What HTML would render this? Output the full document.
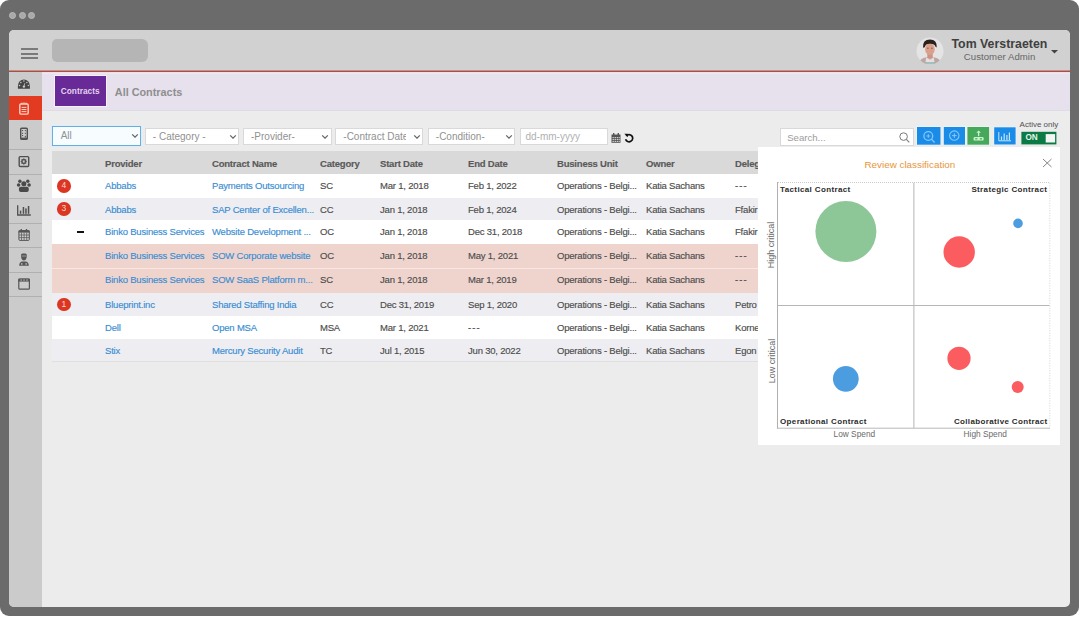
<!DOCTYPE html>
<html><head><meta charset="utf-8">
<style>
*{box-sizing:border-box;margin:0;padding:0}
html,body{width:1080px;height:620px;overflow:hidden;background:#fff;font-family:"Liberation Sans",sans-serif;position:relative}
.a{position:absolute}
.t{position:absolute;white-space:nowrap;line-height:1}
#frame{left:0;top:0;width:1079.2px;height:615.8px;background:#6b6b6b;border-radius:9px}
.dot{width:7.2px;height:7.2px;border-radius:50%;background:#a9a9a9;border:1px solid #bababa;top:11.9px}
#screen{left:9px;top:30px;width:1060.7px;height:576.8px;background:#ececec;border-radius:5px}
#header{left:9px;top:30px;width:1060.7px;height:40.6px;background:#d1d1d1;border-radius:5px 5px 0 0}
#redline{left:9px;top:70.3px;width:1060.7px;height:2.3px;background:linear-gradient(#e8b4ac 0%,#a3524a 40%,#a3524a 60%,#ebc8c8 100%)}
#side{left:9px;top:71.7px;width:32.6px;height:535.3px;background:#cbcbcb;border-bottom-left-radius:5px}
.sep{left:9px;width:32.6px;height:1px;background:#b0b0b0}
#sub{left:41.6px;top:72px;width:1028.1px;height:38.5px;background:#e6e1ec;border-bottom:1px solid #dfdce3}
.sel{position:absolute;top:127.6px;height:17.6px;background:#fff;border:1px solid #d9d9d9}
.sel span{position:absolute;left:7px;top:3.3px;font-size:10px;color:#919191;white-space:nowrap;line-height:1}
.chev{position:absolute;right:1.2px;top:5.3px}
.row{position:absolute;left:52px;width:1006px}
.row .t{font-size:9.5px;letter-spacing:-0.2px;-webkit-text-stroke:0.15px currentColor}
.lnk{color:#3a8dd2}
.dk{color:#4d4d4d}
.badge{position:absolute;left:5px;width:13.6px;height:13.6px;border-radius:50%;background:#dc3622;color:#f6d9d3;font-size:8.5px;text-align:center;line-height:13.6px}
.hd{font-size:9px;font-weight:700;color:#5a5a5a}
.btn{position:absolute;top:127px;height:18px}
</style></head><body>
<div id="frame" class="a"></div>
<div class="a dot" style="left:9.1px"></div>
<div class="a dot" style="left:18.5px"></div>
<div class="a dot" style="left:27.8px"></div>
<div id="screen" class="a"></div>
<div id="header" class="a"></div>
<!-- hamburger -->
<div class="a" style="left:20.8px;top:48.4px;width:17px;height:2.1px;background:#7a7a7a"></div>
<div class="a" style="left:20.8px;top:52.9px;width:17px;height:2.1px;background:#7a7a7a"></div>
<div class="a" style="left:20.8px;top:57.4px;width:17px;height:2.1px;background:#7a7a7a"></div>
<!-- blurred logo -->
<div class="a" style="left:52.2px;top:39.2px;width:96px;height:22.4px;background:#b5b5b5;border-radius:5px 6px 6px 5px;filter:blur(0.7px)"></div>
<!-- user -->
<svg class="a" style="left:916.2px;top:37.3px" width="28" height="28" viewBox="0 0 28 28">
  <defs><clipPath id="cc"><circle cx="14" cy="14" r="13.5"/></clipPath></defs>
  <circle cx="14" cy="14" r="13.5" fill="#e4e4e4"/>
  <g clip-path="url(#cc)">
    <path d="M2.5 27 Q4 21 10.3 20.2 L17.7 20.2 Q24 21 25.5 27 Z" fill="#bba8a5"/>
    <path d="M10.3 20.2 L14 22.8 L17.7 20.2 L18.5 25 L9.5 25 Z" fill="#ecdcdb"/>
    <ellipse cx="14" cy="26.3" rx="5" ry="1.4" fill="#9fc2c0"/>
    <rect x="11.3" y="15.5" width="5.4" height="5.5" fill="#cf937f"/>
    <ellipse cx="13.9" cy="12.2" rx="4.8" ry="5.9" fill="#d9a18b"/>
    <circle cx="11.9" cy="11.2" r="0.7" fill="#8a5a48"/><circle cx="15.9" cy="11.2" r="0.7" fill="#8a5a48"/>
    <path d="M7 10.8 Q6.4 2.6 14 2.5 Q21.2 2.6 20.7 10.4 L19.3 9.6 Q18.6 6.6 14 6.8 Q9.6 6.6 8.7 10.2 Z" fill="#2b201c"/>
  </g>
</svg>
<div class="t" style="left:951.5px;top:37.6px;font-size:12.35px;font-weight:700;color:#3f3f3f">Tom Verstraeten</div>
<div class="t" style="left:963.8px;top:51.5px;font-size:9.6px;color:#666;letter-spacing:0.05px">Customer Admin</div>
<svg class="a" style="left:1051px;top:50px" width="7" height="4" viewBox="0 0 7 4"><path d="M0 0 L7 0 L3.5 3.6Z" fill="#444"/></svg>
<div id="redline" class="a"></div>
<div id="side" class="a"></div>
<!-- red active -->
<div class="a" style="left:9px;top:96.2px;width:32.6px;height:24.3px;background:#e33a22"></div>
<div class="a sep" style="top:149.3px"></div>
<div class="a sep" style="top:173.6px"></div>
<div class="a sep" style="top:198.2px"></div>
<div class="a sep" style="top:222.8px"></div>
<div class="a sep" style="top:247.3px"></div>
<div class="a sep" style="top:271.9px"></div>
<div class="a sep" style="top:296.2px"></div>
<!--SIDE--><svg class="a" style="left:9px;top:72px" width="33" height="230" viewBox="9 72 33 230">
 <!-- dashboard -->
 <path d="M17.9 88.8 L17.9 86 A6 6.6 0 0 1 29.9 86 L29.9 88.8 Z" fill="#464646"/>
 <g fill="#c9c9c9"><circle cx="20.8" cy="82.6" r="0.75"/><circle cx="23.9" cy="80.9" r="0.75"/><circle cx="26.9" cy="82.5" r="0.75"/><circle cx="19.5" cy="85.5" r="0.75"/><circle cx="28.3" cy="85.5" r="0.75"/><circle cx="23.9" cy="86.6" r="1.2"/></g>
 <path d="M23.9 86.6 L24.8 83.2" stroke="#c9c9c9" stroke-width="0.8"/>
 <!-- contracts (active) -->
 <rect x="19.8" y="104" width="8.4" height="10.1" rx="1" stroke="#fbd2c5" stroke-width="1.4" fill="none"/>
 <path d="M21.2 103.3 h1.4 M25.4 103.3 h1.4 M23.3 103 h1.4" stroke="#fbd2c5" stroke-width="1.2"/>
 <path d="M21.6 107.4 H26.4 M21.6 109.5 H26.4 M21.6 111.6 H26.4" stroke="#fbd2c5" stroke-width="1"/>
 <!-- building -->
 <rect x="20.7" y="128.2" width="6.6" height="11" rx="0.9" stroke="#505050" stroke-width="1.4" fill="none"/>
 <path d="M20.2 138.4 H27.7" stroke="#555" stroke-width="1.6"/>
 <g fill="#555"><rect x="22" y="130" width="1.1" height="1.1"/><rect x="24.8" y="130" width="1.1" height="1.1"/><rect x="22" y="132.8" width="1.1" height="1.1"/><rect x="24.8" y="132.8" width="1.1" height="1.1"/><rect x="22" y="135" width="1.1" height="1.1"/><rect x="24.8" y="135.8" width="1.1" height="1.6"/></g>
 <!-- gear box -->
 <rect x="19.2" y="156.6" width="9.5" height="9.9" rx="1" stroke="#505050" stroke-width="1.4" fill="none"/>
 <circle cx="23.8" cy="161.5" r="2" stroke="#555" stroke-width="1.3" fill="none"/>
 <path d="M23.8 158.3 V164.7 M20.6 161.5 H27 M21.5 159.2 L26.1 163.8 M26.1 159.2 L21.5 163.8" stroke="#555" stroke-width="0.7"/>
 <circle cx="23.8" cy="161.5" r="0.9" fill="#c9c9c9"/>
 <!-- people -->
 <g fill="#4a4a4a">
  <circle cx="19.9" cy="181.2" r="1.7"/><circle cx="27.8" cy="181.2" r="1.7"/>
  <circle cx="18.6" cy="185" r="1.8"/><circle cx="29.1" cy="185" r="1.8"/>
  <circle cx="23.85" cy="183.8" r="2.5"/>
  <rect x="18.9" y="186.7" width="9.9" height="5.3" rx="2"/>
 </g>
 <!-- chart -->
 <path d="M17.7 205.2 V215 H30.8" stroke="#505050" stroke-width="1.3" fill="none"/>
 <g fill="#505050"><rect x="19.8" y="210.6" width="1.5" height="3.2"/><rect x="22.7" y="207" width="1.5" height="6.8"/><rect x="25.2" y="208.4" width="1.5" height="5.4"/><rect x="27.8" y="206" width="1.5" height="7.8"/></g>
 <!-- calendar -->
 <rect x="18.9" y="230.6" width="10.4" height="9.8" rx="1" stroke="#555" stroke-width="1" fill="none"/>
 <rect x="18.6" y="230.4" width="11" height="2.2" fill="#555"/>
 <path d="M21.3 229 V231.2 M26.5 229 V231.2" stroke="#555" stroke-width="1.3"/>
 <path d="M21.5 232.5 V240 M24.1 232.5 V240 M26.7 232.5 V240 M19 235 H29.2 M19 237.6 H29.2" stroke="#555" stroke-width="0.7"/>
 <!-- person -->
 <path d="M21 254.5 L22.3 253.6 L23.9 253.4 L25.5 253.6 L26.8 254.5 L26.6 257.2 Q26 260.4 23.9 260.6 Q21.8 260.4 21.2 257.2 Z" fill="#555"/>
 <path d="M21.8 256 H26" stroke="#c9c9c9" stroke-width="0.6"/>
 <path d="M19.2 265.8 Q19.2 261.6 22.4 261.4 L25.4 261.4 Q28.8 261.6 28.8 265.8 Z" fill="#555"/>
 <g fill="#c9c9c9"><rect x="21" y="263.3" width="1.5" height="1.3"/><rect x="25.4" y="263.3" width="1.5" height="1.3"/></g>
 <!-- window -->
 <rect x="18.8" y="279.1" width="10.6" height="10.1" rx="1" stroke="#555" stroke-width="1.2" fill="none"/>
 <rect x="18.4" y="278.6" width="11.4" height="3" fill="#555"/>
 <g fill="#c9c9c9"><rect x="20.4" y="279.6" width="1.6" height="0.9"/><rect x="23.2" y="279.6" width="1.6" height="0.9"/><rect x="26.2" y="279.6" width="1.6" height="0.9"/></g>
</svg>
<!--/SIDE-->
<div id="sub" class="a"></div><div class="a" style="left:41.6px;top:72.6px;width:1028.1px;height:1.6px;background:#f6e4ea"></div>
<!-- Contracts tab -->
<div class="a" style="left:53.8px;top:75.3px;width:53px;height:32px;background:#f3f1f5"></div>
<div class="a" style="left:54.8px;top:76.3px;width:51px;height:30px;background:#672a96"></div>
<div class="t" style="left:60.8px;top:87px;font-size:8.3px;font-weight:700;color:#e3d3ef">Contracts</div>
<div class="t" style="left:114.8px;top:86.8px;font-size:10.85px;font-weight:700;color:#8e8e8e">All Contracts</div>

<!-- filters -->
<div class="sel" style="left:52.2px;top:126.3px;height:19.5px;width:88.5px;border:1.5px solid #6aaee0;box-shadow:0 0 0 1px #dbeef9;background:#f7fdff"><span style="left:7.5px;top:4.1px;font-size:10px">All</span><svg class="chev" width="8" height="5" viewBox="0 0 8 5"><path d="M1.2 1.4 L4 4.1 L6.8 1.4" stroke="#666" stroke-width="1.3" fill="none"/></svg></div>
<div class="sel" style="left:144.8px;width:94.5px"><span>- Category -</span><svg class="chev" width="8" height="5" viewBox="0 0 8 5"><path d="M1.2 1.4 L4 4.1 L6.8 1.4" stroke="#666" stroke-width="1.3" fill="none"/></svg></div>
<div class="sel" style="left:243px;width:88.5px"><span>-Provider-</span><svg class="chev" width="8" height="5" viewBox="0 0 8 5"><path d="M1.2 1.4 L4 4.1 L6.8 1.4" stroke="#666" stroke-width="1.3" fill="none"/></svg></div>
<div class="sel" style="left:335.3px;width:88px;overflow:hidden"><span>-Contract Date</span><div class="a" style="right:0;top:0;width:16px;height:17px;background:#fff"></div><svg class="chev" width="8" height="5" viewBox="0 0 8 5"><path d="M1.2 1.4 L4 4.1 L6.8 1.4" stroke="#666" stroke-width="1.3" fill="none"/></svg></div>
<div class="sel" style="left:427.8px;width:87.5px"><span>-Condition-</span><svg class="chev" width="8" height="5" viewBox="0 0 8 5"><path d="M1.2 1.4 L4 4.1 L6.8 1.4" stroke="#666" stroke-width="1.3" fill="none"/></svg></div>
<div class="sel" style="left:519.5px;width:88px"><span style="left:5px;color:#b0b0b0">dd-mm-yyyy</span></div>
<!-- calendar icon -->
<svg class="a" style="left:610.5px;top:132.5px" width="10" height="10" viewBox="0 0 10 10">
  <rect x="0.5" y="1.5" width="9" height="8.3" fill="#555"/>
  <rect x="2" y="0" width="1.4" height="2.5" fill="#555"/><rect x="6.6" y="0" width="1.4" height="2.5" fill="#555"/>
  <g fill="#ccc"><rect x="1.5" y="4" width="1.4" height="1.2"/><rect x="3.6" y="4" width="1.4" height="1.2"/><rect x="5.7" y="4" width="1.4" height="1.2"/><rect x="7.6" y="4" width="1.2" height="1.2"/>
  <rect x="1.5" y="6" width="1.4" height="1.2"/><rect x="3.6" y="6" width="1.4" height="1.2"/><rect x="5.7" y="6" width="1.4" height="1.2"/><rect x="7.6" y="6" width="1.2" height="1.2"/>
  <rect x="1.5" y="8" width="1.4" height="1"/><rect x="3.6" y="8" width="1.4" height="1"/><rect x="5.7" y="8" width="1.4" height="1"/><rect x="7.6" y="8" width="1.2" height="1"/></g>
</svg>
<!-- undo icon -->
<svg class="a" style="left:623.5px;top:133px" width="10" height="10" viewBox="0 0 10 10">
  <path d="M2.2 3 A3.6 3.6 0 1 1 1.6 6.2" stroke="#111" stroke-width="1.7" fill="none"/>
  <path d="M0.3 0.8 L3.8 0.8 L3.8 4.3 Z" fill="#111"/>
</svg>

<!-- search -->
<div class="sel" style="left:780.4px;width:133.5px;height:18.2px"><span style="left:5.8px;top:4.6px;font-size:9.6px;color:#9c9c9c">Search...</span>
<svg class="a" style="left:117.3px;top:3.6px" width="11" height="11" viewBox="0 0 11 11"><circle cx="4.6" cy="4.6" r="3.8" stroke="#7a7a7a" stroke-width="1" fill="none"/><path d="M7.4 7.4 L10.3 10.3" stroke="#7a7a7a" stroke-width="1.1"/></svg></div>
<!-- buttons -->
<svg class="a" style="left:912px;top:122px" width="150" height="28" viewBox="912 122 150 28">
 <rect x="916.5" y="126.5" width="24.5" height="18.7" fill="#eef8fc"/>
 <rect x="917" y="127" width="23.5" height="17.7" fill="#1a8ce8"/>
 <circle cx="928.3" cy="136" r="4.4" stroke="#86c8f8" stroke-width="1.3" fill="none"/>
 <path d="M931.5 139.3 L934.6 142.5" stroke="#86c8f8" stroke-width="1.3"/>
 <path d="M926.3 136 H930.3 M928.3 134 V138" stroke="#86c8f8" stroke-width="0.9"/>
 <rect x="943.3" y="126.5" width="22.2" height="18.7" fill="#eef8fc"/>
 <rect x="943.8" y="127" width="21.2" height="17.7" fill="#1a8ce8"/>
 <circle cx="954.3" cy="135.6" r="4.7" stroke="#86c8f8" stroke-width="1.1" fill="none"/>
 <path d="M952 135.6 H956.6 M954.3 133.3 V137.9" stroke="#86c8f8" stroke-width="1"/>
 <rect x="966.9" y="126.5" width="22.7" height="18.7" fill="#eefaf0"/>
 <rect x="967.4" y="127" width="21.7" height="17.7" fill="#46a85b"/>
 <path d="M978.6 136.2 V131.8" stroke="#c9f2cc" stroke-width="1.3"/>
 <path d="M976.3 132.8 L978.6 130.4 L980.9 132.8 Z" fill="#c9f2cc"/>
 <rect x="973.6" y="137" width="10" height="3.6" rx="1.2" fill="#c9f2cc"/>
 <rect x="975.2" y="138.2" width="2.2" height="1.2" fill="#46a85b"/><rect x="979.8" y="138.2" width="2.2" height="1.2" fill="#46a85b"/>
 <rect x="993.7" y="126.8" width="22.4" height="18.2" fill="#eef8fc"/>
 <rect x="994.2" y="127.3" width="21.4" height="17.2" fill="#1a8ce8"/>
 <path d="M998.8 132 V140.8 H1011" stroke="#c4e6fd" stroke-width="1" fill="none"/>
 <g fill="#c4e6fd"><rect x="1000.9" y="136.5" width="1.2" height="3.6"/><rect x="1003.6" y="133.5" width="1.2" height="6.6"/><rect x="1006.3" y="135" width="1.2" height="5.1"/><rect x="1008.8" y="132.5" width="1.2" height="7.6"/></g>
 <rect x="1021.4" y="131.8" width="35" height="12.6" fill="#0b7a45"/>
 <rect x="1045.7" y="134.1" width="9.4" height="8.4" fill="#f5f5f5"/>
</svg>
<div class="t" style="left:1019.6px;top:121px;font-size:8px;color:#505050">Active only</div>
<div class="t" style="left:1025.5px;top:134.2px;font-size:8.2px;font-weight:700;color:#e4f6ea">ON</div>

<!-- table -->
<div class="row" style="top:151px;height:23px;background:#d9d9d9">
  <div class="t hd" style="left:53px;top:7.5px">Provider</div>
  <div class="t hd" style="left:160px;top:7.5px">Contract Name</div>
  <div class="t hd" style="left:268px;top:7.5px">Category</div>
  <div class="t hd" style="left:328px;top:7.5px">Start Date</div>
  <div class="t hd" style="left:416px;top:7.5px">End Date</div>
  <div class="t hd" style="left:505px;top:7.5px">Business Unit</div>
  <div class="t hd" style="left:594px;top:7.5px">Owner</div>
  <div class="t hd" style="left:683px;top:7.5px">Delegate</div>
</div>
<!--ROWS--><div class="row" style="top:174px;height:24px;background:#ffffff"><div class="badge" style="left:5.2px;top:5.2px">4</div><div class="t lnk" style="left:53px;top:7.4px;">Abbabs</div><div class="t lnk" style="left:160px;top:7.4px;">Payments Outsourcing</div><div class="t dk" style="left:268px;top:7.4px;">SC</div><div class="t dk" style="left:328px;top:7.4px;">Mar 1, 2018</div><div class="t dk" style="left:416px;top:7.4px;">Feb 1, 2022</div><div class="t dk" style="left:505px;top:7.4px;">Operations - Belgi...</div><div class="t dk" style="left:594px;top:7.4px;">Katia Sachans</div><div class="t dk" style="left:683px;top:7.4px;letter-spacing:1.1px;">---</div></div>
<div class="row" style="top:198px;height:22.3px;background:#eeeef2"><div class="badge" style="left:5.2px;top:4.4px">3</div><div class="t lnk" style="left:53px;top:6.6px;">Abbabs</div><div class="t lnk" style="left:160px;top:6.6px;">SAP Center of Excellen...</div><div class="t dk" style="left:268px;top:6.6px;">CC</div><div class="t dk" style="left:328px;top:6.6px;">Jan 1, 2018</div><div class="t dk" style="left:416px;top:6.6px;">Feb 1, 2024</div><div class="t dk" style="left:505px;top:6.6px;">Operations - Belgi...</div><div class="t dk" style="left:594px;top:6.6px;">Katia Sachans</div><div class="t dk" style="left:683px;top:6.6px;">Ffakir</div></div>
<div class="row" style="top:220.3px;height:23.7px;background:#ffffff"><div class="a" style="left:24.8px;top:10.8px;width:7px;height:2px;background:#111"></div><div class="t lnk" style="left:53px;top:7.2px;">Binko Business Services</div><div class="t lnk" style="left:160px;top:7.2px;">Website Development ...</div><div class="t dk" style="left:268px;top:7.2px;">OC</div><div class="t dk" style="left:328px;top:7.2px;">Jan 1, 2018</div><div class="t dk" style="left:416px;top:7.2px;">Dec 31, 2018</div><div class="t dk" style="left:505px;top:7.2px;">Operations - Belgi...</div><div class="t dk" style="left:594px;top:7.2px;">Katia Sachans</div><div class="t dk" style="left:683px;top:7.2px;">Ffakir</div></div>
<div class="row" style="top:244px;height:24px;background:#efd4ce"><div class="t lnk" style="left:53px;top:7.4px;">Binko Business Services</div><div class="t lnk" style="left:160px;top:7.4px;">SOW Corporate website</div><div class="t dk" style="left:268px;top:7.4px;">OC</div><div class="t dk" style="left:328px;top:7.4px;">Jan 1, 2018</div><div class="t dk" style="left:416px;top:7.4px;">May 1, 2021</div><div class="t dk" style="left:505px;top:7.4px;">Operations - Belgi...</div><div class="t dk" style="left:594px;top:7.4px;">Katia Sachans</div><div class="t dk" style="left:683px;top:7.4px;letter-spacing:1.1px;">---</div></div>
<div class="row" style="top:269px;height:24.4px;background:#efd4ce"><div class="t lnk" style="left:53px;top:5.9px;">Binko Business Services</div><div class="t lnk" style="left:160px;top:5.9px;">SOW SaaS Platform m...</div><div class="t dk" style="left:268px;top:5.9px;">SC</div><div class="t dk" style="left:328px;top:5.9px;">Jan 1, 2018</div><div class="t dk" style="left:416px;top:5.9px;">Mar 1, 2019</div><div class="t dk" style="left:505px;top:5.9px;">Operations - Belgi...</div><div class="t dk" style="left:594px;top:5.9px;">Katia Sachans</div><div class="t dk" style="left:683px;top:5.9px;letter-spacing:1.1px;">---</div></div>
<div class="row" style="top:293.4px;height:22.3px;background:#eeeef2"><div class="badge" style="left:5.2px;top:4.4px">1</div><div class="t lnk" style="left:53px;top:6.6px;">Blueprint.inc</div><div class="t lnk" style="left:160px;top:6.6px;">Shared Staffing India</div><div class="t dk" style="left:268px;top:6.6px;">CC</div><div class="t dk" style="left:328px;top:6.6px;">Dec 31, 2019</div><div class="t dk" style="left:416px;top:6.6px;">Sep 1, 2020</div><div class="t dk" style="left:505px;top:6.6px;">Operations - Belgi...</div><div class="t dk" style="left:594px;top:6.6px;">Katia Sachans</div><div class="t dk" style="left:683px;top:6.6px;">Petro</div></div>
<div class="row" style="top:315.7px;height:23.3px;background:#ffffff"><div class="t lnk" style="left:53px;top:7.1px;">Dell</div><div class="t lnk" style="left:160px;top:7.1px;">Open MSA</div><div class="t dk" style="left:268px;top:7.1px;">MSA</div><div class="t dk" style="left:328px;top:7.1px;">Mar 1, 2021</div><div class="t dk" style="left:416px;top:7.1px;letter-spacing:1.1px;">---</div><div class="t dk" style="left:505px;top:7.1px;">Operations - Belgi...</div><div class="t dk" style="left:594px;top:7.1px;">Katia Sachans</div><div class="t dk" style="left:683px;top:7.1px;">Korne</div></div>
<div class="row" style="top:339px;height:22.6px;background:#eeeef2"><div class="t lnk" style="left:53px;top:6.7px;">Stix</div><div class="t lnk" style="left:160px;top:6.7px;">Mercury Security Audit</div><div class="t dk" style="left:268px;top:6.7px;">TC</div><div class="t dk" style="left:328px;top:6.7px;">Jul 1, 2015</div><div class="t dk" style="left:416px;top:6.7px;">Jun 30, 2022</div><div class="t dk" style="left:505px;top:6.7px;">Operations - Belgi...</div><div class="t dk" style="left:594px;top:6.7px;">Katia Sachans</div><div class="t dk" style="left:683px;top:6.7px;">Egon</div></div>
<div class="a" style="left:52px;top:361.3px;width:1006px;height:1.2px;background:#dfdfe0"></div><div class="a" style="left:52px;top:268px;width:1006px;height:1px;background:#fbe6e3"></div><!--/ROWS-->

<!-- modal -->
<!--MODAL--><div class="a" style="left:757.5px;top:147.3px;width:302.5px;height:297.3px;background:#fff"></div>
<div class="t" style="left:864.5px;top:160px;font-size:9.85px;color:#e8953b">Review classification</div>
<svg class="a" style="left:1042px;top:158px" width="11" height="10" viewBox="0 0 11 10"><path d="M1 1 L9.5 9 M9.5 1 L1 9" stroke="#858585" stroke-width="1" fill="none"/></svg>
<svg class="a" style="left:757px;top:147px" width="303" height="296" viewBox="757 147 303 296">
  <path d="M778 182.5 H1049.8" stroke="#c9c9c9" stroke-width="1" stroke-dasharray="1 1" fill="none"/>
  <path d="M1049.8 182.8 V428" stroke="#d2d2d2" stroke-width="1" stroke-dasharray="1 1.5" fill="none"/>
  <path d="M777.5 182 V428.7" stroke="#b0b0b0" stroke-width="1" fill="none"/>
  <path d="M777 428.2 H1050" stroke="#b9b9b9" stroke-width="1" fill="none"/>
  <path d="M913.9 182.8 V428" stroke="#b6b6b6" stroke-width="1" fill="none"/>
  <path d="M777.5 305.5 H1049.5" stroke="#b6b6b6" stroke-width="1" fill="none"/>
  <circle cx="845.9" cy="231.5" r="30.5" fill="#8dc697"/>
  <circle cx="959.2" cy="252" r="15.7" fill="#fb5c5f"/>
  <circle cx="1018" cy="223.4" r="4.8" fill="#4c9de0"/>
  <circle cx="845.8" cy="378.8" r="12.9" fill="#4c9de0"/>
  <circle cx="959" cy="358.3" r="11.6" fill="#fb5c5f"/>
  <circle cx="1017.7" cy="387" r="6" fill="#fb5c5f"/>
</svg>
<div class="t" style="left:780.1px;top:185.5px;font-size:8px;font-weight:700;color:#2b2b2b;letter-spacing:0.36px">Tactical Contract</div>
<div class="t" style="left:971.4px;top:185.5px;font-size:8px;font-weight:700;color:#2b2b2b;letter-spacing:0.36px">Strategic Contract</div>
<div class="t" style="left:780px;top:417.9px;font-size:8px;font-weight:700;color:#2b2b2b;letter-spacing:0.36px">Operational Contract</div>
<div class="t" style="left:953.9px;top:417.9px;font-size:8px;font-weight:700;color:#2b2b2b;letter-spacing:0.36px">Collaborative Contract</div>
<div class="t" style="left:833.6px;top:430.3px;font-size:8.3px;color:#6a6a6a">Low Spend</div>
<div class="t" style="left:963.6px;top:430.3px;font-size:8.3px;color:#6a6a6a">High Spend</div>
<div class="t" style="left:771px;top:245.3px;font-size:9px;color:#6a6a6a;transform:translate(-50%,-50%) rotate(-90deg)">High critical</div>
<div class="t" style="left:771.5px;top:360.5px;font-size:9px;color:#6a6a6a;transform:translate(-50%,-50%) rotate(-90deg)">Low critical</div>
<!--/MODAL-->
</body></html>
